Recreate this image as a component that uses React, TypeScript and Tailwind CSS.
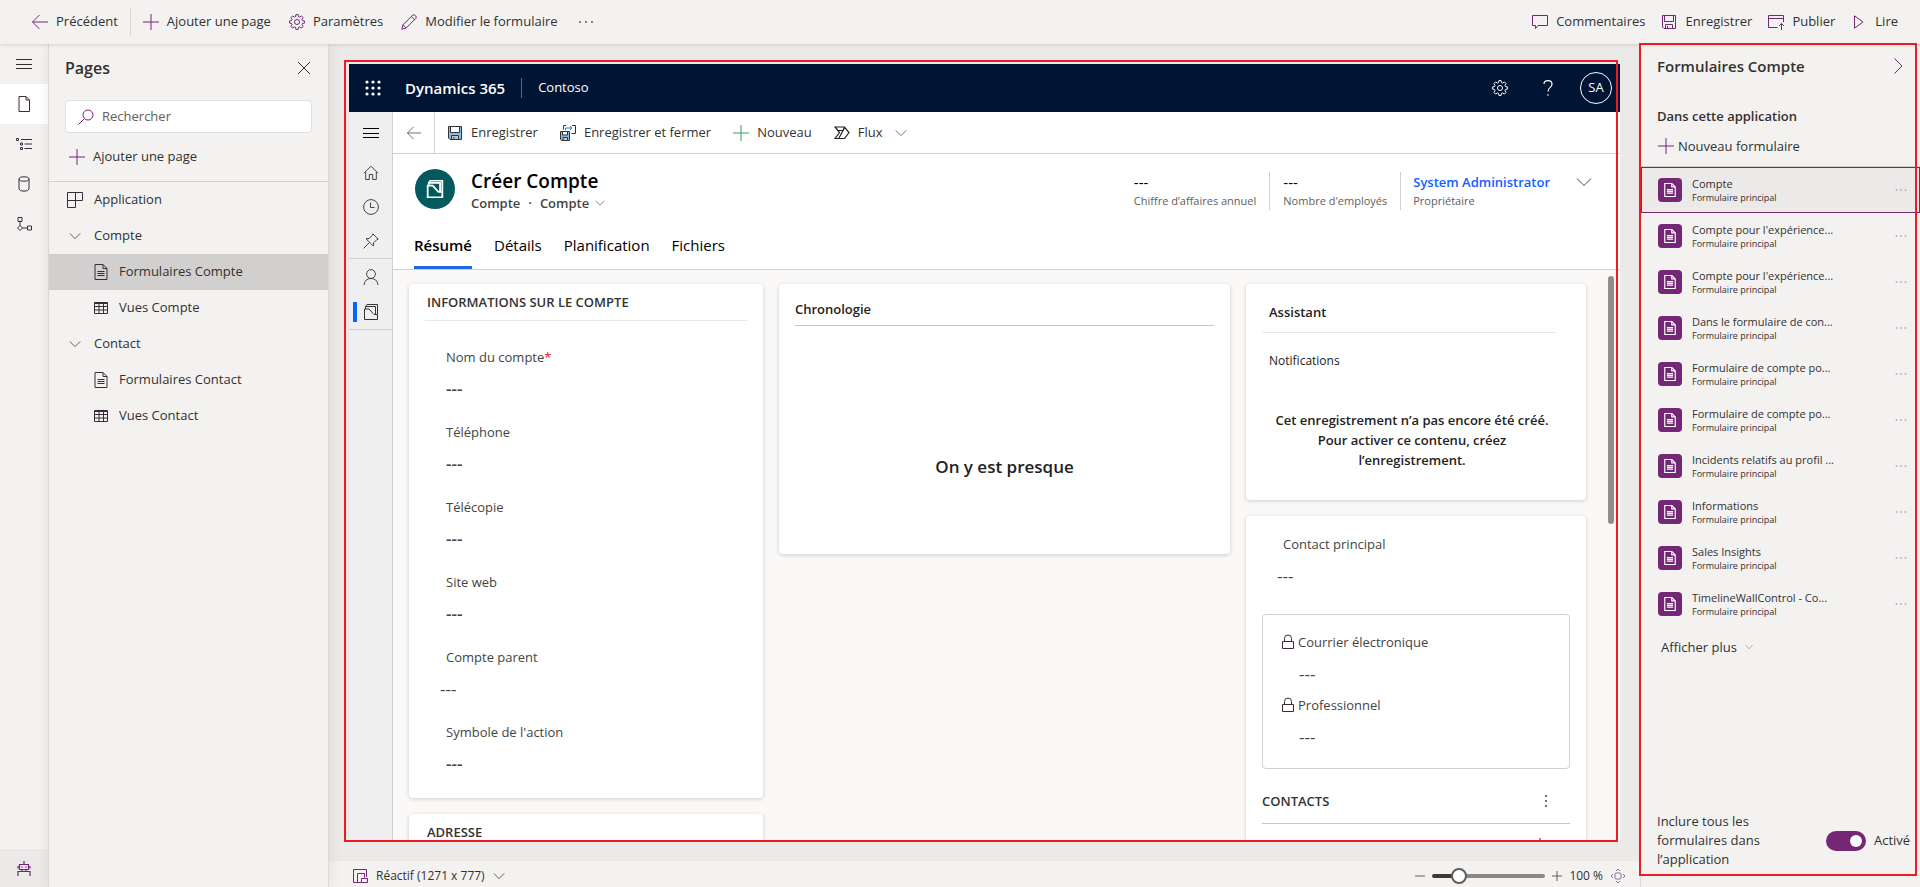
import React from "react";

interface IconProps {
  className?: string;
  children: React.ReactNode;
}

const Icon: React.FC<IconProps> = ({ className = "h-4 w-4 text-[#742774]", children }) => (
  <svg
    className={`shrink-0 ${className}`}
    viewBox="0 0 16 16"
    fill="none"
    stroke="currentColor"
    strokeWidth="1"
    aria-hidden="true"
  >
    {children}
  </svg>
);

type ShapeProps = { className?: string };

const ArrowLeft = ({ className }: ShapeProps) => (
  <Icon className={className}><path d="M0.5 8H16M7.5 1L0.5 8L7.5 15" /></Icon>
);
const Plus = ({ className }: ShapeProps) => (
  <Icon className={className}><path d="M8 0V16M0 8H16" /></Icon>
);
const ChevronDown = ({ className }: ShapeProps) => (
  <Icon className={className}><path d="M1 4.5L8 11.5L15 4.5" /></Icon>
);
const Menu = ({ className }: ShapeProps) => (
  <Icon className={className}><path d="M0 3.5H16M0 8.5H16M0 12.5H16" /></Icon>
);
const Dots = ({ className }: ShapeProps) => (
  <Icon className={className}>
    <path d="M1 8H3M7 8H9M13 8H15" strokeWidth="1.5" />
  </Icon>
);
const Gear = ({ className }: ShapeProps) => (
  <Icon className={className}>
    <path d="M6.9 0.6H9.1L9.5 2.6L10.7 3.1L12.4 1.9L14.1 3.6L12.9 5.3L13.4 6.5L15.4 6.9V9.1L13.4 9.5L12.9 10.7L14.1 12.4L12.4 14.1L10.7 12.9L9.5 13.4L9.1 15.4H6.9L6.5 13.4L5.3 12.9L3.6 14.1L1.9 12.4L3.1 10.7L2.6 9.5L0.6 9.1V6.9L2.6 6.5L3.1 5.3L1.9 3.6L3.6 1.9L5.3 3.1L6.5 2.6Z" strokeLinejoin="round" />
    <circle cx="8" cy="8" r="2.5" />
  </Icon>
);
const Pencil = ({ className }: ShapeProps) => (
  <Icon className={className}>
    <path d="M0.8 15.2L2 10.8L11.8 1Q13 0.2 14.4 1.6Q15.8 3 15 4.2L5.2 14ZM10.3 2.5L13.5 5.7M2 10.8L5.2 14" />
  </Icon>
);
const Comment = () => (
  <Icon><path d="M0.5 1.5H15.5V11.5H6L3.5 14.5V11.5H0.5Z" /></Icon>
);
const Save = () => (
  <Icon><path d="M1.5 1.5H14.5V14.5H3L1.5 13ZM3.5 1.5V7.5H12.5V1.5M4.5 14.5V10.5H11.5V14.5M6.5 12V14.5" /></Icon>
);
const Publish = () => (
  <Icon><path d="M9.5 13.5H0.5V1.5H15.5V8M0.5 4.5H15.5M13.5 16V9.5M11 12L13.5 9.5L16 12" /></Icon>
);
const Play = () => (
  <Icon><path d="M3.5 1.8L12 8L3.5 14.2Z" /></Icon>
);
const Page = ({ className }: ShapeProps) => (
  <Icon className={className}><path d="M3 0.5H10L13.5 4V15.5H3ZM10 0.5V4H13.5" /></Icon>
);
const FormPage = ({ className }: ShapeProps) => (
  <Icon className={className}>
    <path d="M2 0.5H10L14 4.5V15.5H2ZM10 0.5V4.5H14M4.5 7.5H11.5M4.5 9.5H11.5M4.5 11.5H11.5" />
  </Icon>
);
const Table = () => (
  <Icon className="h-4 w-4 text-[#3b2a3b]">
    <path d="M1.5 2.5H14.5V13.5H1.5ZM1.5 3.5H14.5M1.5 6.5H14.5M1.5 10H14.5M6 3V13.5M10.5 3V13.5" />
  </Icon>
);
const AppTiles = () => (
  <Icon className="h-4 w-4 text-[#3b2a3b]"><path d="M0.5 0.5H15.5V8.5H8.5V15.5H0.5ZM8.5 0.5V8.5H0.5" /></Icon>
);
const Tree = () => (
  <Icon className="h-4 w-4 text-[#3b2a3b]">
    <path d="M0.5 2.5H2.5V4.5H0.5ZM5 3.5H16M4.5 7H6.5V9H4.5ZM8.5 8H16M4.5 11.5H6.5V13.5H4.5ZM8.5 12.5H16" />
  </Icon>
);
const Database = () => (
  <Icon className="h-4 w-4 text-[#3b2a3b]">
    <ellipse cx="8" cy="3" rx="5" ry="2.2" />
    <path d="M3 3V13Q3.5 15.2 8 15.2Q12.5 15.2 13 13V3" />
  </Icon>
);
const FlowNodes = () => (
  <Icon className="h-4 w-4 text-[#3b2a3b]">
    <path d="M2 1.5H6V5.5H2ZM4 5.5V9.5M4 9.5L6.5 12L4 14.5L1.5 12ZM6.5 12H11.5M11.5 10H15.5V14H11.5Z" />
  </Icon>
);
const Robot = () => (
  <Icon>
    <path d="M8 1V4M3.5 4.5H12.5V9.5H3.5ZM2 6V8.5M14 6V8.5M6 9.5V11.5M10 9.5V11.5M2 16V11.5H14V16" strokeWidth="1.2" />
    <path d="M5.5 7H6.5M9.5 7H10.5" strokeWidth="1.5" />
  </Icon>
);
const Search = () => (
  <Icon><circle cx="10" cy="6" r="5" /><path d="M6.4 9.6L0.5 15.5" /></Icon>
);
const Close = () => (
  <Icon className="h-4 w-4 text-[#323130]"><path d="M2 2L14 14M14 2L2 14" /></Icon>
);
const Home = () => (
  <Icon className="h-4 w-4 text-[#444]"><path d="M1 8.2L8 1.2L15 8.2M2.7 7V14.5H6.3V9.5H9.7V14.5H13.3V7" /></Icon>
);
const Clock = () => (
  <Icon className="h-4 w-4 text-[#444]"><circle cx="8" cy="8" r="7.4" /><path d="M7.5 3.5V8.5H11.5" /></Icon>
);
const Pin = () => (
  <Icon className="h-4 w-4 text-[#444]">
    <path d="M9.8 0.8L15.2 6.2L13.6 6.8L10.6 9.8L10.3 13L3 5.8L6.3 5.4L9.2 2.4ZM6.6 9.4L0.6 15.4" />
  </Icon>
);
const Person = () => (
  <Icon className="h-4 w-4 text-[#444]">
    <circle cx="8" cy="5" r="4.4" /><path d="M1 16Q1.8 9.5 8 9.5Q14.2 9.5 15 16" />
  </Icon>
);
const Account = ({ className = "h-4 w-4 text-[#333]" }: ShapeProps) => (
  <Icon className={className}>
    <path d="M1.5 15.5V5H6L11 10.5H14.5V15.5ZM2.5 5V2.5H12.5V10.5M2.5 2.5L4 0.5H14.5V10.5" />
  </Icon>
);
const Lock = () => (
  <Icon className="h-4 w-4 text-[#3b2a3b]">
    <path d="M2.5 7.5H13.5V14.5H2.5ZM4.5 7.5V4.5Q4.5 1 8 1Q11.5 1 11.5 4.5V7.5" />
  </Icon>
);
const SaveColor = () => (
  <Icon className="h-4 w-4 text-[#333]">
    <path d="M1.5 1.5H14.5V14.5H3L1.5 13Z" fill="#83beec" />
    <path d="M3.5 1.5H12.5V7.5H3.5Z" fill="#fff" />
    <path d="M4.5 10.5H11.5V14.5H4.5Z" fill="#c8c6c4" />
    <path d="M7 12V14.5" />
  </Icon>
);
const SaveClose = () => (
  <Icon className="h-4 w-4 text-[#333]">
    <path d="M0.5 6.5H9.5V15.5H1.5L0.5 14.5Z" fill="#83beec" />
    <path d="M2.5 6.5H7.5V10H2.5Z" fill="#fff" />
    <path d="M3 12.5H7.5V15.5H3Z" fill="#c8c6c4" />
    <path d="M3.5 4.5V0.5H6M12 0.5H15.5V8.5H11.5" />
    <path d="M5.5 5V3H12M10 1L12 3L10 5" stroke="#1e7bc8" />
  </Icon>
);
const FlowMark = () => (
  <Icon className="h-4 w-4 text-[#222]">
    <path d="M1 2H10.5L15 7.5L10.5 13.5H1L5.5 7.5ZM1 2L4 5.5H9L5 13M9 5.5L10.5 2" strokeWidth="1.2" />
  </Icon>
);
const Device = () => (
  <Icon><path d="M9.5 14.5H1.5V1.5H14.5V9M5.5 14.5V5.5H12.5V9.5M9.5 10.5H15.5V14.5H9.5Z" /></Icon>
);
const Fit = () => (
  <Icon className="h-4 w-4 text-[#8a7595]">
    <rect x="5" y="5" width="6" height="6" rx="1" />
    <path d="M6 3L8 1L10 3M6 13L8 15L10 13M3 6L1 8L3 10M13 6L15 8L13 10" />
  </Icon>
);

const railItems = [
  { label: "Menu", icon: <Menu className="h-4 w-4 text-[#323130]" /> },
  { label: "Pages", icon: <Page className="h-4 w-4 text-[#3b2a3b]" />, active: true },
  { label: "Navigation", icon: <Tree /> },
  { label: "Données", icon: <Database /> },
  { label: "Automatisation", icon: <FlowNodes /> },
];

const treeItems = [
  { label: "Application", kind: "app" },
  { label: "Compte", kind: "group" },
  { label: "Formulaires Compte", kind: "form", selected: true },
  { label: "Vues Compte", kind: "view" },
  { label: "Contact", kind: "group" },
  { label: "Formulaires Contact", kind: "form" },
  { label: "Vues Contact", kind: "view" },
];

const accountFields = [
  { label: "Nom du compte", required: true },
  { label: "Téléphone" },
  { label: "Télécopie" },
  { label: "Site web" },
  { label: "Compte parent", lookup: true },
  { label: "Symbole de l'action" },
];

const forms = [
  "Compte",
  "Compte pour l'expérience...",
  "Compte pour l'expérience...",
  "Dans le formulaire de con...",
  "Formulaire de compte po...",
  "Formulaire de compte po...",
  "Incidents relatifs au profil ...",
  "Informations",
  "Sales Insights",
  "TimelineWallControl - Co...",
];

const TopBar = () => (
  <header className="relative z-10 flex h-11 shrink-0 items-center justify-between bg-[#f3f2f1] pr-[22px] pl-8 shadow-[0_1px_4px_rgba(0,0,0,0.12)]">
    <div className="flex items-center">
      <button className="flex items-center gap-2"><ArrowLeft />Précédent</button>
      <div className="mx-3 h-7 w-px bg-[#d8d6d4]" />
      <div className="flex items-center gap-[18px]">
        <button className="flex items-center gap-2"><Plus />Ajouter une page</button>
        <button className="flex items-center gap-2"><Gear />Paramètres</button>
        <button className="flex items-center gap-2"><Pencil />Modifier le formulaire</button>
      </div>
      <button className="ml-5" aria-label="Plus"><Dots className="h-4 w-4 text-[#605e5c]" /></button>
    </div>
    <div className="flex items-center gap-4">
      <button className="flex items-center gap-2"><Comment />Commentaires</button>
      <button className="flex items-center gap-2"><Save />Enregistrer</button>
      <button className="flex items-center gap-2"><Publish />Publier</button>
      <button className="flex items-center gap-2"><Play />Lire</button>
    </div>
  </header>
);

const Rail = () => (
  <nav className="flex w-[49px] shrink-0 flex-col justify-between border-r border-[#e1dfdd] bg-[#f3f2f1]">
    <div>
      {railItems.map((item) => (
        <button
          key={item.label}
          aria-label={item.label}
          className={`flex h-10 w-full items-center justify-center ${item.active ? "bg-white" : ""}`}
        >
          {item.icon}
        </button>
      ))}
    </div>
    <button aria-label="Assistant virtuel" className="flex h-[38px] items-center justify-center bg-[#ebeae8]">
      <Robot />
    </button>
  </nav>
);

const PagesPanel = () => (
  <aside className="relative z-[5] w-[280px] shrink-0 border-r border-[#dddbd9] bg-[#f3f2f1] shadow-[0_0_14px_rgba(0,0,0,0.08)]">
    <div className="flex h-12 items-center justify-between pr-4 pl-4">
      <h2 className="text-base font-semibold">Pages</h2>
      <button aria-label="Fermer"><Close /></button>
    </div>
    <label className="mx-4 mt-2 flex h-[33px] items-center gap-2 rounded-sm border border-[#e1dfdd] bg-white px-3">
      <Search />
      <input
        type="text"
        placeholder="Rechercher"
        aria-label="Rechercher"
        className="min-w-0 flex-1 bg-transparent outline-none placeholder:text-[#605e5c]"
      />
    </label>
    <button className="flex h-12 w-full items-center gap-2 pl-5"><Plus />Ajouter une page</button>
    <ul className="border-t border-[#d2d0ce]">
      {treeItems.map((item) => {
        const nested = item.kind === "form" || item.kind === "view";
        return (
          <li key={item.label}>
            <button
              className={`flex h-9 w-full items-center text-left ${nested ? "gap-[10px] pl-11" : "gap-[11px] pl-[18px]"} ${item.selected ? "bg-[#d2d0ce]" : ""}`}
            >
              {item.kind === "app" && <AppTiles />}
              {item.kind === "group" && (
                <span className="flex w-4 justify-center"><ChevronDown className="h-3 w-3 text-[#323130]" /></span>
              )}
              {item.kind === "form" && <FormPage className="h-4 w-4 text-[#3b2a3b]" />}
              {item.kind === "view" && <Table />}
              {item.label}
            </button>
          </li>
        );
      })}
    </ul>
  </aside>
);

const AppHeader = () => (
  <div className="flex h-12 shrink-0 items-center bg-[#001433] pr-2 pl-4 text-white">
    <button aria-label="Lanceur d'applications">
      <svg className="h-4 w-4" viewBox="0 0 16 16" fill="currentColor" aria-hidden="true">
        {[2, 8, 14].map((y) => [2, 8, 14].map((x) => <circle key={`${x}-${y}`} cx={x} cy={y} r="1.6" />))}
      </svg>
    </button>
    <span className="ml-6 text-[15px] font-semibold">Dynamics 365</span>
    <div className="mx-4 h-5 w-px bg-[#5b677d]" />
    <span>Contoso</span>
    <div className="ml-auto flex items-center">
      <button aria-label="Paramètres"><Gear className="h-4 w-4 text-white" /></button>
      <button aria-label="Aide" className="mr-6 ml-8 flex w-4 justify-center">
        <Icon className="h-4 w-4 text-white">
          <path d="M4 4Q4 0.6 8 0.6Q12 0.6 12 4Q12 6 10 7.6Q8 9.2 8 11.6M8 14.2V15.8" strokeWidth="1.2" />
        </Icon>
      </button>
      <button className="h-8 w-8 rounded-full border border-white text-[13px]">SA</button>
    </div>
  </div>
);

const SiteNav = () => (
  <nav className="w-11 shrink-0 border-r border-[#d2d0ce] bg-[#efefef]">
    <button aria-label="Menu" className="flex h-[42px] w-full items-center justify-center">
      <Menu className="h-4 w-4 text-black" />
    </button>
    <div className="border-b border-[#d2d0ce] pt-[2px]">
      <button aria-label="Accueil" className="flex h-[34px] w-full items-center justify-center"><Home /></button>
      <button aria-label="Récents" className="flex h-[34px] w-full items-center justify-center"><Clock /></button>
      <button aria-label="Épinglés" className="flex h-[34px] w-full items-center justify-center"><Pin /></button>
    </div>
    <div className="border-b border-[#d2d0ce]">
      <button aria-label="Contacts" className="flex h-9 w-full items-center justify-center"><Person /></button>
      <button aria-label="Comptes" className="flex h-[34px] w-full items-center pl-1">
        <span className="h-5 w-1 bg-[#0066ff]" />
        <span className="ml-[6px]"><Account /></span>
      </button>
    </div>
  </nav>
);

const CommandBar = () => (
  <div className="flex h-[42px] shrink-0 items-center border-b border-[#d2d0ce] bg-white text-[#333]">
    <button aria-label="Retour" className="flex h-full w-[42px] items-center justify-center border-r border-[#d2d0ce]">
      <ArrowLeft className="h-[14px] w-[14px] text-[#605e5c]" />
    </button>
    <div className="ml-3 flex items-center gap-[22px]">
      <button className="flex items-center gap-2"><SaveColor />Enregistrer</button>
      <button className="flex items-center gap-2"><SaveClose />Enregistrer et fermer</button>
      <button className="flex items-center gap-2"><Plus className="h-4 w-4 text-[#2fa35a]" />Nouveau</button>
      <button className="flex items-center gap-2">
        <FlowMark />Flux<ChevronDown className="ml-1 h-3 w-3 text-[#444]" />
      </button>
    </div>
  </div>
);

const RecordHeader = () => (
  <div className="shrink-0 border-b border-[#d2d0ce] bg-white">
    <div className="flex items-start pt-[15px] pr-7 pl-[22px]">
      <div className="flex h-10 w-10 items-center justify-center rounded-full bg-[#025a5e]">
        <Account className="h-[18px] w-[18px] text-white [stroke-width:1.6]" />
      </div>
      <div className="ml-4">
        <h1 className="text-[19px] leading-6 font-semibold text-black">Créer Compte</h1>
        <div className="flex items-center leading-5 font-semibold text-[#444]">
          Compte<span className="mx-2">·</span>Compte
          <ChevronDown className="ml-[6px] h-[10px] w-[10px] text-[#444]" />
        </div>
      </div>
      <div className="mt-[3px] ml-auto flex items-start">
        <div className="h-[38px] pr-[13px]">
          <div className="text-[15px] leading-5 text-black">---</div>
          <div className="text-[11px] leading-[18px] text-[#605e5c]">Chiffre d’affaires annuel</div>
        </div>
        <div className="h-[38px] border-l border-[#d2d0ce] px-[13px]">
          <div className="text-[15px] leading-5 text-black">---</div>
          <div className="text-[11px] leading-[18px] text-[#605e5c]">Nombre d'employés</div>
        </div>
        <div className="h-[38px] border-l border-[#d2d0ce] pl-3">
          <a href="#" className="block leading-5 font-semibold text-[#1160ff]">System Administrator</a>
          <div className="text-[11px] leading-[18px] text-[#605e5c]">Propriétaire</div>
        </div>
        <button aria-label="Développer" className="mt-[2px] ml-[26px]"><ChevronDown className="h-4 w-4 text-[#444]" /></button>
      </div>
    </div>
    <div className="mt-2 flex h-12 gap-[22px] pl-[21px] text-[15px] text-black">
      <button className="border-b-[3px] border-[#2266e3] pt-1 font-semibold">Résumé</button>
      <button className="border-b-[3px] border-transparent pt-1">Détails</button>
      <button className="border-b-[3px] border-transparent pt-1">Planification</button>
      <button className="border-b-[3px] border-transparent pt-1">Fichiers</button>
    </div>
  </div>
);

const cardClass = "rounded bg-white shadow-[0_1px_4px_rgba(0,0,0,0.18)]";

const AccountCard = () => (
  <section className={`${cardClass} h-[514px] px-4 pt-2`}>
    <h3 className="border-b border-[#e9e8e7] px-[2px] pb-2 leading-5 font-semibold text-[#333]">
      INFORMATIONS SUR LE COMPTE
    </h3>
    <dl className="pt-[26px] pl-[21px]">
      {accountFields.map((field) => (
        <div key={field.label} className="h-[75px] text-[#444]">
          <dt className="leading-5">
            {field.label}
            {field.required && <span className="text-[#e81123]">*</span>}
          </dt>
          <dd className={`mt-3 text-[17px] leading-5 ${field.lookup ? "-ml-[6px]" : "font-semibold"}`}>---</dd>
        </div>
      ))}
    </dl>
  </section>
);

const AssistantCard = () => (
  <section className={`${cardClass} h-[216px] pt-[18px] text-[#222]`}>
    <h3 className="mr-[30px] ml-4 border-b border-[#e9e8e7] pb-[10px] pl-[7px] leading-5 font-semibold">Assistant</h3>
    <div className="mt-[18px] pl-[23px] text-xs leading-5">Notifications</div>
    <p className="mt-[39px] ml-[21px] w-[290px] text-center leading-5 font-semibold">
      Cet enregistrement n’a pas encore été créé. Pour activer ce contenu, créez l’enregistrement.
    </p>
  </section>
);

const ContactCard = () => (
  <section className={`${cardClass} px-4 pt-[18px] text-[#444]`}>
    <div className="pl-[21px] leading-5">Contact principal</div>
    <div className="mt-3 pl-[15px] text-[17px] leading-5">---</div>
    <div className="mt-7 h-[155px] rounded border border-[#d2d0ce] pt-[17px] pl-[17px]">
      {["Courrier électronique", "Professionnel"].map((label) => (
        <div key={label} className="h-[63px]">
          <div className="flex items-center gap-[2px] leading-5"><Lock />{label}</div>
          <div className="mt-3 pl-[19px] text-[17px] leading-5">---</div>
        </div>
      ))}
    </div>
    <div className="mt-[22px] flex items-center justify-between border-b border-[#c8c6c4] pr-4 pb-3 leading-5 font-semibold text-[#333]">
      CONTACTS
      <button aria-label="Autres commandes">
        <Icon className="h-4 w-4 text-[#444]"><path d="M8 2V4M8 7V9M8 12V14" strokeWidth="1.5" /></Icon>
      </button>
    </div>
    <div className="flex h-20 justify-end pt-[14px] pr-[22px]"><Plus className="h-4 w-4 text-[#222]" /></div>
  </section>
);

const FormBody = () => (
  <div className="relative min-h-0 flex-1 overflow-hidden bg-[#faf9f8]">
    <div className="grid grid-cols-[354fr_451fr_340fr] items-start gap-4 pt-[14px] pr-[34px] pl-4">
      <div className="space-y-4">
        <AccountCard />
        <section className={`${cardClass} h-40 px-[18px] pt-2`}>
          <h3 className="leading-5 font-semibold text-[#333]">ADRESSE</h3>
        </section>
      </div>
      <section className={`${cardClass} flex h-[270px] flex-col px-4 pt-[15px] text-[#222]`}>
        <h3 className="border-b border-[#c8c6c4] pb-[6px] leading-5 font-semibold">Chronologie</h3>
        <div className="flex flex-1 items-center justify-center pt-[54px]">
          <p className="text-[17px] font-semibold">On y est presque</p>
        </div>
      </section>
      <div className="space-y-4">
        <AssistantCard />
        <ContactCard />
      </div>
    </div>
    <div className="absolute top-[6px] right-[6px] h-[248px] w-[6px] rounded-full bg-[#8f8e8c]" />
  </div>
);

const StatusBar = () => (
  <footer className="flex h-[26px] shrink-0 items-center justify-between bg-[#f3f2f1] pt-1 pr-[14px] pl-[23px] text-xs">
    <button className="flex items-center gap-2">
      <Device />Réactif (1271 x 777)<ChevronDown className="h-3 w-3 text-[#323130]" />
    </button>
    <div className="flex items-center gap-[7px]">
      <button aria-label="Zoom arrière">
        <Icon className="h-[10px] w-[10px] text-[#605e5c]"><path d="M0 8H16" strokeWidth="1.6" /></Icon>
      </button>
      <input
        type="range"
        aria-label="Zoom"
        min={0}
        max={100}
        defaultValue={19}
        className="h-1 w-[113px] appearance-none rounded-full bg-[linear-gradient(to_right,#3b3a39_22%,#8a8886_22%)] [&::-webkit-slider-thumb]:h-4 [&::-webkit-slider-thumb]:w-4 [&::-webkit-slider-thumb]:appearance-none [&::-webkit-slider-thumb]:rounded-full [&::-webkit-slider-thumb]:border-2 [&::-webkit-slider-thumb]:border-[#605e5c] [&::-webkit-slider-thumb]:bg-white"
      />
      <button aria-label="Zoom avant">
        <Icon className="h-[10px] w-[10px] text-[#605e5c]"><path d="M0 8H16M8 0V16" strokeWidth="1.6" /></Icon>
      </button>
      <span>100 %</span>
      <button aria-label="Ajuster"><Fit /></button>
    </div>
  </footer>
);

const FormsPanel = () => (
  <aside className="relative flex w-[280px] shrink-0 flex-col border-l border-[#dddbd9] bg-[#f3f2f1]">
    <div className="flex h-11 items-center justify-between pr-[14px] pl-4">
      <h2 className="text-[15px] font-semibold">Formulaires Compte</h2>
      <button aria-label="Réduire">
        <Icon><path d="M4.5 0.5L12 8L4.5 15.5" /></Icon>
      </button>
    </div>
    <h3 className="mt-[18px] pl-4 leading-5 font-semibold">Dans cette application</h3>
    <button className="mt-[10px] flex items-center gap-1 pl-[17px] leading-5"><Plus />Nouveau formulaire</button>
    <ul className="mt-[10px] border-t border-[#d2d0ce]">
      {forms.map((name, i) => (
        <li
          key={i}
          className={`flex h-[46px] items-center border pr-3 pl-4 ${i === 0 ? "border-[#742774] bg-[#ebeae8]" : "border-transparent"}`}
        >
          <span className="flex h-6 w-6 items-center justify-center rounded bg-[#742774]">
            <FormPage className="h-[14px] w-[14px] text-white [stroke-width:1.3]" />
          </span>
          <button className="ml-[10px] text-left">
            <span className="block text-[11px] leading-4">{name}</span>
            <span className="block text-[9px] leading-3">Formulaire principal</span>
          </button>
          <button aria-label="Plus" className="ml-auto"><Dots className="h-3 w-3 text-[#8a7595]" /></button>
        </li>
      ))}
    </ul>
    <button className="mt-[10px] flex items-center gap-2 pl-5 leading-5">
      Afficher plus<ChevronDown className="h-2 w-2 text-[#605e5c]" />
    </button>
    <label className="mt-auto mb-[18px] flex cursor-pointer items-center pr-1 pl-4 leading-[19px]">
      <span className="w-[120px]">Inclure tous les formulaires dans l’application</span>
      <input type="checkbox" defaultChecked className="peer sr-only" />
      <span className="ml-auto flex h-5 w-10 items-center justify-end rounded-full bg-[#742774] pr-1">
        <span className="h-3 w-3 rounded-full bg-white" />
      </span>
      <span className="ml-2 w-[42px]">Activé</span>
    </label>
    <div className="pointer-events-none absolute -top-px right-[3px] bottom-[11px] -left-[2px] z-20 border-2 border-[#ed1c24]" />
  </aside>
);

export default function App() {
  return (
    <div className="flex h-screen flex-col overflow-hidden bg-[#f3f2f1] font-['Open_Sans','Noto_Sans',sans-serif] text-[13px] text-[#323130]">
      <TopBar />
      <div className="flex min-h-0 flex-1">
        <Rail />
        <PagesPanel />
        <main className="flex min-w-0 flex-1 flex-col">
          <div className="flex min-h-0 flex-1 bg-[#ebeae8] p-5">
            <div className="relative flex min-w-0 flex-1">
              <div className="flex min-w-0 flex-1 flex-col overflow-hidden">
                <AppHeader />
                <div className="flex min-h-0 flex-1">
                  <SiteNav />
                  <div className="flex min-w-0 flex-1 flex-col">
                    <CommandBar />
                    <RecordHeader />
                    <FormBody />
                  </div>
                </div>
              </div>
              <div className="pointer-events-none absolute -top-1 right-[2px] -bottom-px -left-[5px] border-2 border-[#ed1c24]" />
            </div>
          </div>
          <StatusBar />
        </main>
        <FormsPanel />
      </div>
    </div>
  );
}
